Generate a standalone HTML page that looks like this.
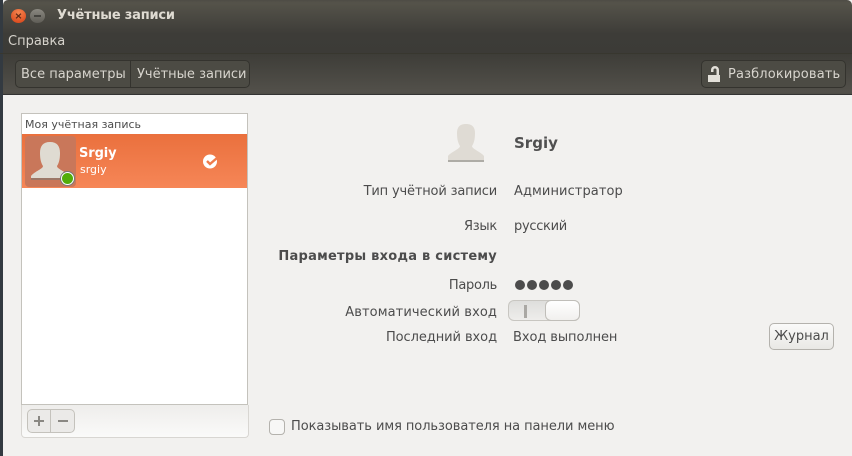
<!DOCTYPE html>
<html><head><meta charset="utf-8"><style>
html,body{margin:0;padding:0}
body{width:852px;height:456px;overflow:hidden;position:relative;background:#f2f1ef;font-family:"DejaVu Sans",sans-serif;font-size:13px;color:#4c4c4c}
.a{position:absolute;white-space:nowrap;line-height:16px}
.r{text-align:right;right:355px}
</style></head><body>
<div class="a" style="left:0;top:0;width:3px;height:456px;background:#333a41"></div>
<div class="a" style="left:3px;top:0;width:849px;height:94px;border-radius:5px 5px 0 0;overflow:hidden;background:linear-gradient(#4e4c45 0,#55534a 3px,#3d3c38 34px,#3c3b37 53px,#3e3d38 54px,#52504a 92px,#4e4d46 94px);border-bottom:1px solid #333"></div>
<div class="a" style="left:0;top:53px;width:852px;height:1px;background:#38372f"></div>
<svg class="a" style="left:11px;top:9px" width="15" height="14" viewBox="0 0 15 14"><defs><radialGradient id="c" cx="50%" cy="25%" r="80%"><stop offset="0" stop-color="#f5854f"/><stop offset="1" stop-color="#d9471b"/></radialGradient></defs><ellipse cx="7.5" cy="7" rx="7.5" ry="7" fill="url(#c)"/><path d="M5 4.7l5 4.6M10 4.7l-5 4.6" stroke="#5e2a16" stroke-width="1.2"/></svg>
<div class="a" style="left:30px;top:9px;width:15px;height:14px;border-radius:50%;background:linear-gradient(#8a8880,#5f5d57)"><div style="position:absolute;left:4px;top:6px;width:7px;height:2px;background:#45443f"></div></div>
<div class="a" style="left:57px;top:8px;font-weight:bold;color:#dfdbd2;letter-spacing:-.2px;font-size:13px">Учётные записи</div>
<div class="a" style="left:8px;top:34px;color:#d6d3cc">Справка</div>
<div class="a" style="left:15px;top:60px;width:233px;height:26px;border:1px solid #34332e;border-radius:5px;background:#4c4b44"></div>
<div class="a" style="left:130px;top:61px;width:1px;height:26px;background:#34332e"></div>
<div class="a" style="left:21px;top:67px;color:#d8d5ce">Все параметры</div>
<div class="a" style="left:137px;top:67px;color:#d8d5ce">Учётные записи</div>
<div class="a" style="left:701px;top:60px;width:143px;height:26px;border:1px solid #34332e;border-radius:5px;background:#4c4b44"></div>
<svg class="a" style="left:707px;top:64px" width="15" height="18" viewBox="0 0 15 18"><rect x="1" y="11" width="12" height="7" fill="#e2dfd8"/><path d="M5.25 8V6A2.75 2.75 0 0 1 10.75 6V11" fill="none" stroke="#e2dfd8" stroke-width="2.5"/></svg>
<div class="a" style="left:728px;top:67px;color:#d8d5ce;letter-spacing:.14px">Разблокировать</div>

<div class="a" style="left:21px;top:113px;width:225px;height:290px;border:1px solid #c4c2bc;background:#fff"></div>
<div class="a" style="left:25px;top:117px;font-size:11px;color:#4c4c4c">Моя учётная запись</div>
<div class="a" style="left:22px;top:134px;width:225px;height:54px;background:linear-gradient(#ea703d,#f68657)"></div>
<div class="a" style="left:25px;top:136px;width:51px;height:51px;border-radius:4px;background:#c9775a"></div>
<svg class="a" style="left:30px;top:141px" width="42" height="42" viewBox="0 0 42 42"><path d="M20 1c7 0 10 4 10 11 0 6-1 10-3 13 0 3 8 5 12 10v2H1v-2c4-5 12-7 12-10-2-3-3-7-3-13 0-7 3-11 10-11z" fill="#dfdbd2"/><rect x="1" y="37" width="38" height="2" fill="#9c7767"/></svg>
<div class="a" style="left:61px;top:172px;width:11px;height:11px;border:1px solid #fff;border-radius:50%;background:#52ad0a;box-shadow:0 0 0 1px #777"></div>
<div class="a" style="left:79px;top:146px;font-weight:bold;color:#fff;letter-spacing:-.1px">Srgiy</div>
<div class="a" style="left:80px;top:162px;color:#fff;font-size:11px">srgiy</div>
<svg class="a" style="left:203px;top:154px" width="15" height="15" viewBox="0 0 15 15"><circle cx="7" cy="7.5" r="7" fill="#fff"/><path d="M4 7l3 3 7-6" fill="none" stroke="#ef7b4b" stroke-width="2.4"/></svg>

<div class="a" style="left:21px;top:405px;width:226px;height:32px;border:1px solid #d8d6d2;border-top:0;border-radius:0 0 4px 4px;background:linear-gradient(#eeedeb,#fafaf9)"></div>
<div class="a" style="left:27px;top:409px;width:46px;height:22px;border:1px solid #c4c2bc;border-radius:5px;background:#ebeae8"></div>
<div class="a" style="left:50px;top:410px;width:1px;height:22px;background:#c4c2bc"></div>
<svg class="a" style="left:32px;top:413px" width="40" height="16" viewBox="0 0 40 16"><path d="M2 8h10M7 3v10M26 8h10" stroke="#8a8883" stroke-width="2"/></svg>

<svg class="a" style="left:447px;top:124px" width="38" height="40" viewBox="0 0 38 40"><path d="M19 0c6 0 9 3 9 9 0 6-1 10-3 13 0 3 9 6 12 10v6H1v-6c3-4 12-7 12-10-2-3-3-7-3-13 0-6 3-9 9-9z" fill="#dfdbd4"/><rect x="1" y="36" width="36" height="2" fill="#aeaca6"/></svg>
<div class="a" style="left:514px;top:134px;font-size:15px;line-height:18px;font-weight:bold;color:#505050">Srgiy</div>

<div class="a r" style="top:184px;letter-spacing:-.17px">Тип учётной записи</div>
<div class="a" style="left:514px;top:184px;letter-spacing:.08px">Администратор</div>
<div class="a r" style="top:219px;letter-spacing:-.25px">Язык</div>
<div class="a" style="left:514px;top:219px;letter-spacing:-.3px">русский</div>
<div class="a r" style="top:249px;font-weight:bold;letter-spacing:.25px">Параметры входа в систему</div>
<div class="a r" style="top:278px;letter-spacing:-.3px">Пароль</div>
<svg class="a" style="left:514px;top:279px" width="60" height="12"><g fill="#4c4c4c"><circle cx="6" cy="6" r="5"/><circle cx="18" cy="6" r="5"/><circle cx="30" cy="6" r="5"/><circle cx="42" cy="6" r="5"/><circle cx="54" cy="6" r="5"/></g></svg>
<div class="a r" style="top:305px;letter-spacing:.1px">Автоматический вход</div>
<div class="a" style="left:508px;top:300px;width:70px;height:19px;border:1px solid #c8c6c1;border-radius:6px;background:linear-gradient(#dededc,#eeedeb)"></div>
<div class="a" style="left:524px;top:305px;width:3px;height:13px;background:#aaa8a4"></div>
<div class="a" style="left:545px;top:300px;width:33px;height:19px;border:1px solid #c0beb9;border-radius:6px;background:linear-gradient(#fff,#f1f0ee)"></div>
<div class="a r" style="top:330px;letter-spacing:-.07px">Последний вход</div>
<div class="a" style="left:513px;top:330px;letter-spacing:-.08px">Вход выполнен</div>
<div class="a" style="left:769px;top:323px;width:63px;height:25px;border:1px solid #b4b2ad;border-radius:5px;background:linear-gradient(#fafaf9,#e9e8e5);text-align:center;line-height:26px">Журнал</div>
<div class="a" style="left:269px;top:419px;width:14px;height:14px;border:1px solid #b4b2ad;border-radius:4px;background:#f7f7f6"></div>
<div class="a" style="left:291px;top:419px;letter-spacing:-.07px">Показывать имя пользователя на панели меню</div>
</body></html>
